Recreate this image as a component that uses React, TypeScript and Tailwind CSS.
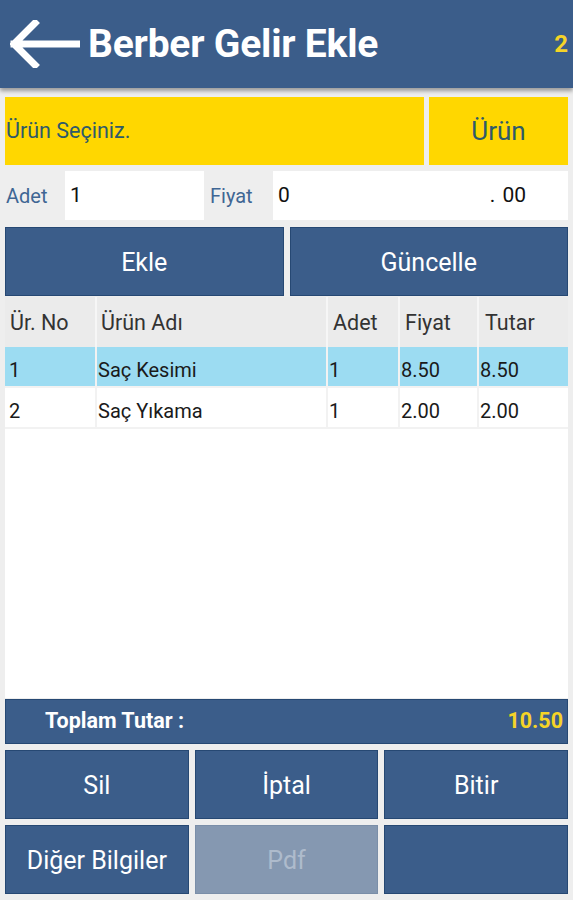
import React from 'react';

const rows = [
  { no: '1', name: 'Saç Kesimi', adet: '1', fiyat: '8.50', tutar: '8.50', selected: true },
  { no: '2', name: 'Saç Yıkama', adet: '1', fiyat: '2.00', tutar: '2.00', selected: false },
];

const cols = 'grid grid-cols-[90px_229px_70px_77px_89px] gap-x-[2px]';

const App = () => {
  return (
    <div
      className="w-[573px] h-[900px] bg-[#eeeeee] flex flex-col overflow-hidden"
      style={{ fontFamily: 'Roboto, "Liberation Sans", sans-serif' }}
    >
      {/* Header */}
      <header className="h-[88px] shrink-0 bg-[#3b5d8a] flex items-center pl-[10px] pr-[5px] shadow-[0_3px_4px_rgba(0,0,0,0.35)] z-10">
        <svg width="70" height="48" viewBox="0 0 70 48" className="shrink-0">
          <path d="M4 24 H68 M25 3 L4 24 L25 45" fill="none" stroke="#fff" strokeWidth="7" strokeLinecap="square" strokeLinejoin="miter" />
        </svg>
        <h1 className="ml-[8px] text-white font-bold text-[39px] leading-none tracking-[-0.2px]">Berber Gelir Ekle</h1>
        <span className="ml-auto text-[#f5d327] font-bold text-[24px] leading-none">2</span>
      </header>

      <div className="flex-1 flex flex-col px-[5px]">
        {/* Product select */}
        <div className="mt-[9px] h-[68px] flex gap-[5px]">
          <div className="flex-1 bg-[#ffd700] flex items-center pl-[1px] text-[21.5px] text-[#2e5a6a]">Ürün Seçiniz.</div>
          <div className="w-[139px] bg-[#ffd700] flex items-center justify-center text-[26px] text-[#2e5a6a]">Ürün</div>
        </div>

        {/* Adet / Fiyat */}
        <div className="mt-[6px] h-[49px] flex items-stretch">
          <div className="w-[60px] flex items-center pl-[1px] text-[20px] text-[#3f6694]">Adet</div>
          <div className="w-[139px] bg-white flex items-center pl-[5px] text-[21px] text-[#111]">1</div>
          <div className="w-[69px] flex items-center pl-[6px] text-[20px] text-[#3f6694]">Fiyat</div>
          <div className="flex-1 bg-white flex items-center pl-[5px] pr-[42px] text-[21px] text-[#111]">
            <span>0</span>
            <span className="ml-auto">.</span>
            <span className="ml-[7px]">00</span>
          </div>
        </div>

        {/* Ekle / Güncelle */}
        <div className="mt-[7px] h-[69px] flex gap-[6px]">
          <button className="flex-1 bg-[#3b5d8a] border border-[#264873] text-white text-[25px] pt-[2px]">Ekle</button>
          <button className="flex-1 bg-[#3b5d8a] border border-[#264873] text-white text-[25px] pt-[2px]">Güncelle</button>
        </div>

        {/* Table */}
        <div className="mt-[1px] h-[401px] bg-white flex flex-col">
          <div className={`${cols} h-[50px] bg-[#f6f6f6] text-[21.5px] text-[#333]`}>
            <div className="bg-[#ebebeb] flex items-center pl-[5px] pt-[3px]">Ür. No</div>
            <div className="bg-[#ebebeb] flex items-center pl-[4px] pt-[3px]">Ürün Adı</div>
            <div className="bg-[#ebebeb] flex items-center pl-[5px] pt-[3px]">Adet</div>
            <div className="bg-[#ebebeb] flex items-center pl-[5px] pt-[3px]">Fiyat</div>
            <div className="bg-[#ebebeb] flex items-center pl-[6px] pt-[3px]">Tutar</div>
          </div>
          {rows.map(r => {
            const cell = r.selected ? 'bg-[#9cdcf2]' : 'bg-white';
            return (
              <div key={r.no} className={`${cols} h-[41px] bg-[#f2f2f2] border-b-[2px] border-[#f2f2f2] text-[20px] text-[#1a1a1a]`}>
                <div className={`${cell} flex items-center pl-[4px] pt-[6px]`}>{r.no}</div>
                <div className={`${cell} flex items-center pl-[1px] pt-[6px]`}>{r.name}</div>
                <div className={`${cell} flex items-center pl-[1px] pt-[6px]`}>{r.adet}</div>
                <div className={`${cell} flex items-center pl-[1px] pt-[6px]`}>{r.fiyat}</div>
                <div className={`${cell} flex items-center pl-[1px] pt-[6px]`}>{r.tutar}</div>
              </div>
            );
          })}
        </div>

        {/* Total */}
        <div className="mt-[1px] h-[45px] bg-[#3b5d8a] border border-[#264873] flex items-center pl-[39px] pr-[4px]">
          <span className="text-white font-bold text-[21.5px]">Toplam Tutar :</span>
          <span className="ml-auto text-[#f5d327] font-bold text-[21.5px]">10.50</span>
        </div>

        {/* Actions */}
        <div className="mt-[6px] grid grid-cols-3 gap-[6px]">
          {['Sil', 'İptal', 'Bitir', 'Diğer Bilgiler', 'Pdf', ''].map((label, i) => (
            <button
              key={i}
              className={
                label === 'Pdf'
                  ? 'h-[69px] bg-[#8598b1] border border-[#7a8ea8] text-[#aebbcc] text-[25px] pt-[3px]'
                  : 'h-[69px] bg-[#3b5d8a] border border-[#264873] text-white text-[25px] pt-[3px]'
              }
            >
              {label}
            </button>
          ))}
        </div>
      </div>
    </div>
  );
};

export default App;
